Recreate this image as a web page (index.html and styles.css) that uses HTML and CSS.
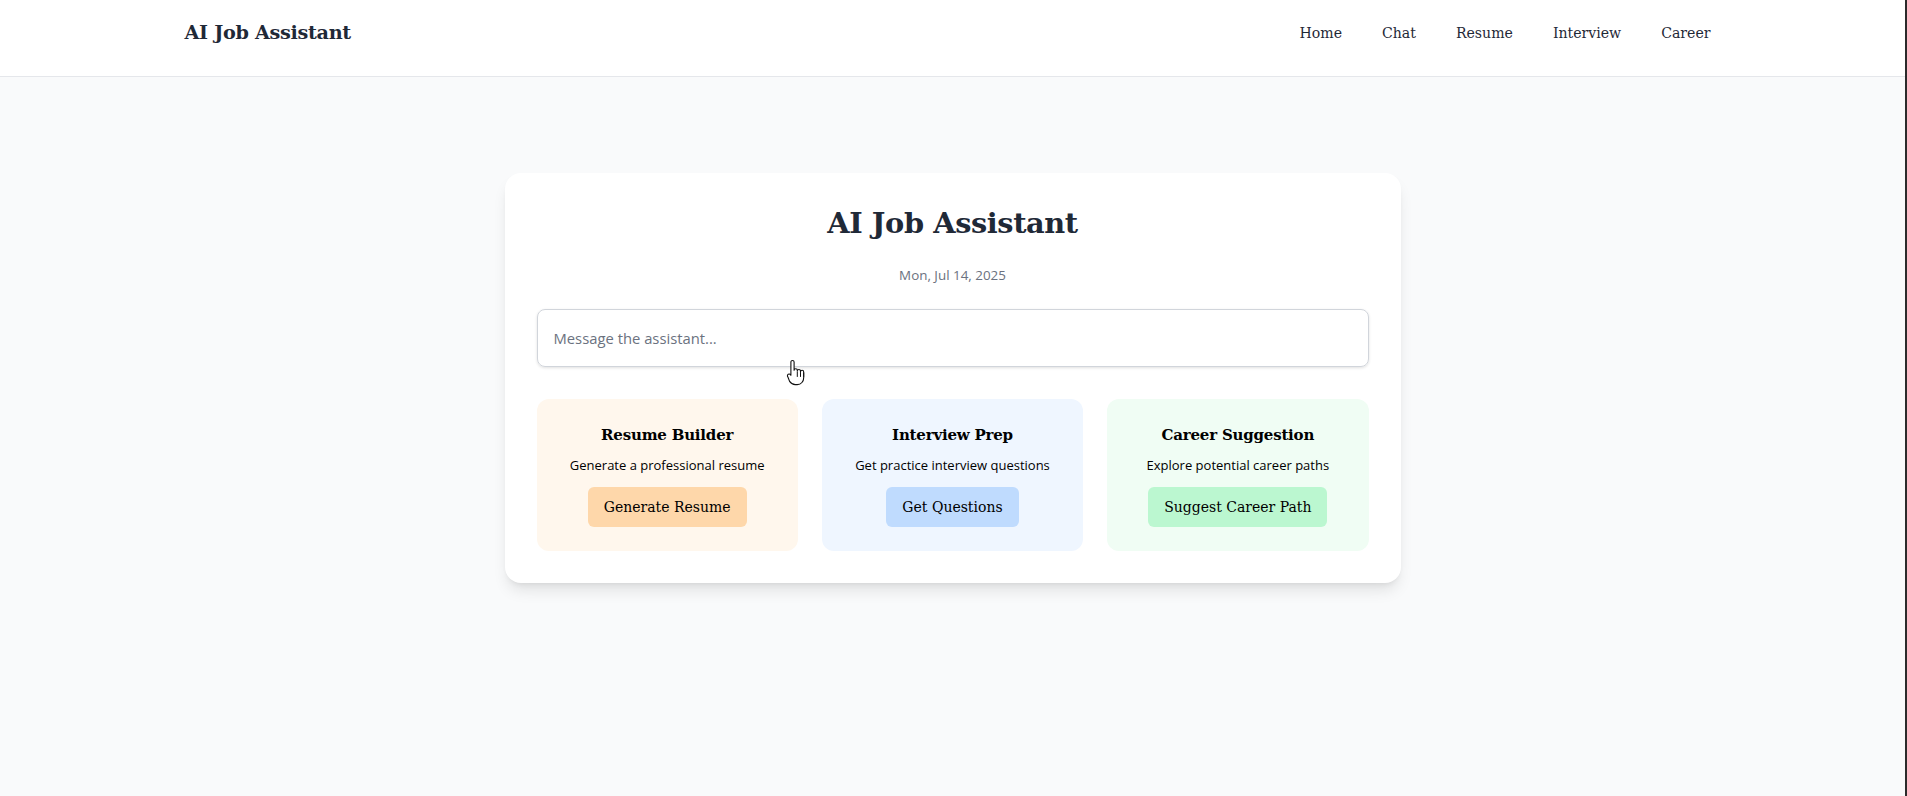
FILE: index.html
```html
<!DOCTYPE html>
<html lang="en">
<head>
<meta charset="utf-8">
<title>AI Job Assistant</title>
<link rel="stylesheet" href="styles.css">
</head>
<body>
<div class="page">
  <header class="header">
    <div class="header-inner">
      <div class="logo">AI Job Assistant</div>
      <nav class="nav">
        <a class="nav-link" href="#">Home</a>
        <a class="nav-link" href="#">Chat</a>
        <a class="nav-link" href="#">Resume</a>
        <a class="nav-link" href="#">Interview</a>
        <a class="nav-link" href="#">Career</a>
      </nav>
    </div>
  </header>
  <main class="main">
    <section class="panel">
      <h1 class="title">AI Job Assistant</h1>
      <p class="date">Mon, Jul 14, 2025</p>
      <div class="input-box">Message the assistant...</div>
      <div class="tools">
        <div class="tool tool-orange">
          <h2 class="tool-title">Resume Builder</h2>
          <p class="tool-desc">Generate a professional resume</p>
          <button class="tool-btn btn-orange">Generate Resume</button>
        </div>
        <div class="tool tool-blue">
          <h2 class="tool-title">Interview Prep</h2>
          <p class="tool-desc">Get practice interview questions</p>
          <button class="tool-btn btn-blue">Get Questions</button>
        </div>
        <div class="tool tool-green">
          <h2 class="tool-title">Career Suggestion</h2>
          <p class="tool-desc">Explore potential career paths</p>
          <button class="tool-btn btn-green">Suggest Career Path</button>
        </div>
      </div>
    </section>
  </main>
  <svg class="cursor" width="22" height="27" viewBox="0 0 22 27" xmlns="http://www.w3.org/2000/svg">
    <path d="M6.5 1.5c1 0 1.6 0.7 1.6 1.6v8.2c0-1 0.7-1.6 1.6-1.6s1.6 0.7 1.6 1.6v0.8c0-1 0.7-1.6 1.6-1.6s1.6 0.7 1.6 1.6v0.8c0-1 0.7-1.6 1.6-1.6s1.6 0.7 1.6 1.6v5.5c0 4-2.5 7.2-6.5 7.2h-2c-2.6 0-4.2-1.2-5.6-3.2L1.9 18c-0.8-1-0.5-2.2 0.3-2.7 0.8-0.5 1.8-0.3 2.4 0.5l0.3 0.5V3.1c0-0.9 0.7-1.6 1.6-1.6z" fill="#ffffff" stroke="#111111" stroke-width="1.1" stroke-linejoin="round"/>
    <path d="M11.3 13v4.5M14.5 13.5v4M17.7 14v3.5" stroke="#111111" stroke-width="1" stroke-linecap="round"/>
  </svg>
</div>
<div class="edge"></div>
</body>
</html>
```

FILE: styles.css
```css
html, body {
  margin: 0;
  padding: 0;
}

body {
  display: flex;
  min-height: 796px;
  background: #f9fafb;
  font-family: "DejaVu Serif", Georgia, serif;
  color: #1f2937;
}

.page {
  flex: 1;
  position: relative;
  background: #f9fafb;
  min-height: 796px;
}

.edge {
  width: 2px;
  background: #2b2b2b;
  flex: none;
}

.header {
  background: #ffffff;
  border-bottom: 1px solid #e5e7eb;
  height: 76px;
}

.header-inner {
  max-width: 1536px;
  margin: 0 auto;
  display: flex;
  justify-content: space-between;
  align-items: flex-start;
  padding-top: 19px;
}

.logo {
  font-size: 19.2px;
  line-height: 28px;
  font-weight: 700;
  color: #1f2937;
  letter-spacing: -0.3px;
}

.nav {
  display: flex;
  gap: 24px;
  padding-top: 2px;
  margin-right: 2px;
}

.nav-link {
  font-size: 14.1px;
  line-height: 24px;
  color: #1f2937;
  text-decoration: none;
  padding: 0 8px;
}

.main {
  padding-top: 96px;
  display: flex;
  justify-content: center;
}

.panel {
  width: 896px;
  box-sizing: border-box;
  background: #ffffff;
  border-radius: 16px;
  padding: 32px 32px 32px;
  box-shadow: 0 10px 15px -3px rgba(0, 0, 0, 0.1), 0 4px 6px -4px rgba(0, 0, 0, 0.1);
}

.title {
  margin: 0 0 24px;
  text-align: center;
  font-size: 28.8px;
  line-height: 36px;
  font-weight: 700;
  color: #1f2937;
  letter-spacing: -0.4px;
}

.date {
  margin: 0 0 24px;
  text-align: center;
  font-family: "Open Sans", "Noto Sans", sans-serif;
  font-size: 13.4px;
  line-height: 20px;
  color: #6b7280;
}

.input-box {
  height: 58px;
  box-sizing: border-box;
  border: 1px solid #d1d5db;
  border-radius: 8px;
  padding: 0 16px;
  display: flex;
  align-items: center;
  font-family: "Open Sans", "Noto Sans", sans-serif;
  font-size: 14.8px;
  color: #6b7280;
  box-shadow: 0 1px 3px rgba(0, 0, 0, 0.12);
}

.tools {
  margin-top: 32px;
  display: grid;
  grid-template-columns: repeat(3, 1fr);
  gap: 24px;
}

.tool {
  border-radius: 12px;
  padding: 24px 16px;
  text-align: center;
  display: flex;
  flex-direction: column;
  align-items: center;
}

.tool-orange { background: #fff7ed; }
.tool-blue { background: #eff6ff; }
.tool-green { background: #f0fdf4; }

.tool-title {
  margin: 0 0 8px;
  font-size: 15px;
  line-height: 24px;
  font-weight: 700;
  color: #000000;
  letter-spacing: -0.2px;
}

.tool-desc {
  margin: 0 0 12px;
  font-family: "Open Sans", "Noto Sans", sans-serif;
  font-size: 13px;
  line-height: 20px;
  color: #000000;
}

.tool-btn {
  height: 40px;
  border: none;
  border-radius: 6px;
  padding: 0 16px;
  font-family: "DejaVu Serif", Georgia, serif;
  font-size: 14px;
  line-height: 24px;
  color: #000000;
}

.btn-orange { background: #fed7aa; }
.btn-blue { background: #bfdbfe; }
.btn-green { background: #bbf7d0; }

.cursor {
  position: absolute;
  left: 786px;
  top: 359px;
}
```
